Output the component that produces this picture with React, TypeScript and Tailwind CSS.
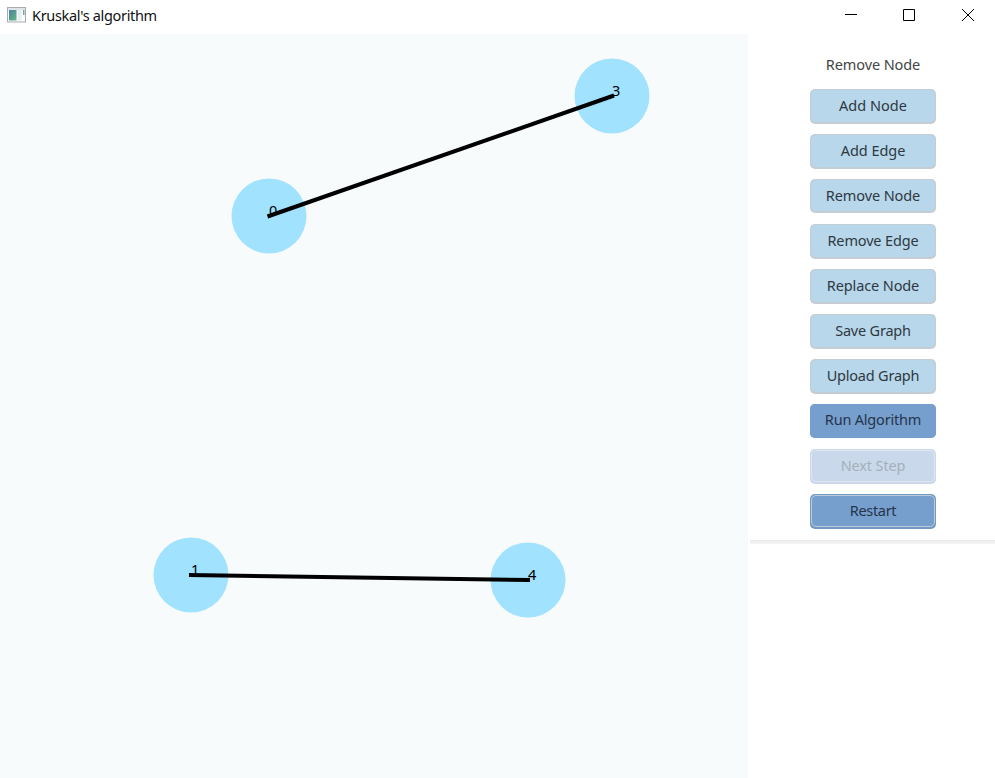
import React from "react";

type Variant = "light" | "run" | "disabled" | "focused";

const buttons: { label: string; variant: Variant; height: string; tracking: string }[] = [
  { label: "Add Node", variant: "light", height: "h-[35px]", tracking: "tracking-[0.05px]" },
  { label: "Add Edge", variant: "light", height: "h-[35px]", tracking: "tracking-[-0.03px]" },
  { label: "Remove Node", variant: "light", height: "h-[34px]", tracking: "tracking-[-0.1px]" },
  { label: "Remove Edge", variant: "light", height: "h-[35px]", tracking: "tracking-[-0.15px]" },
  { label: "Replace Node", variant: "light", height: "h-[35px]", tracking: "tracking-[-0.12px]" },
  { label: "Save Graph", variant: "light", height: "h-[35px]", tracking: "tracking-[-0.2px]" },
  { label: "Upload Graph", variant: "light", height: "h-[35px]", tracking: "tracking-[-0.2px]" },
  { label: "Run Algorithm", variant: "run", height: "h-[34px]", tracking: "tracking-[-0.2px]" },
  { label: "Next Step", variant: "disabled", height: "h-[35px]", tracking: "tracking-[-0.15px]" },
  { label: "Restart", variant: "focused", height: "h-[35px]", tracking: "tracking-[-0.3px]" },
];

const outer: Record<Variant, string> = {
  light: "bg-[#c3cdd3] text-[#2e3941] px-px pt-px pb-[2px]",
  run: "bg-[#769fce] text-[#26344a]",
  disabled: "bg-[#c9d9eb] text-[#a5afba] px-px pt-px pb-[2px]",
  focused: "bg-[#7399c2] text-[#26344a] px-px pt-px pb-[2px]",
};

const inner: Record<Variant, string> = {
  light: "bg-[#b8d7eb] pt-[5px]",
  run: "bg-[#769fce] pt-[5px]",
  disabled: "bg-[#c9d9eb] border border-[#e0e7ee] pt-[4px]",
  focused: "bg-[#769fce] border border-[#bccbdc] pt-[4px]",
};

const nodes = [
  { id: "0", x: 269, y: 216 },
  { id: "3", x: 612, y: 96 },
  { id: "1", x: 191, y: 575 },
  { id: "4", x: 528, y: 580 },
];

function TitleBar() {
  return (
    <header className="flex h-[34px] shrink-0 items-start justify-between bg-white">
      <div className="flex items-start pl-[7px]">
        <svg className="mt-[7px] h-[16px] w-[19px]" viewBox="0 0 19 16">
          <defs>
            <linearGradient id="pane" x1="0" y1="0" x2="1" y2="1">
              <stop offset="0" stopColor="#4a83a0" />
              <stop offset="1" stopColor="#62b783" />
            </linearGradient>
          </defs>
          <rect x="0.5" y="0.5" width="18" height="14.5" fill="#fafbfc" stroke="#a7acb1" />
          <rect x="1" y="1" width="17" height="2" fill="#dfe4e8" />
          <rect x="2" y="3" width="7.5" height="10.5" fill="url(#pane)" />
          <rect x="10.5" y="3" width="4" height="10.5" fill="#e9edf2" />
          <rect x="16" y="3" width="1.5" height="5" fill="#70a9a0" />
        </svg>
        <span className="ml-[6px] text-[14.5px] leading-[31px] tracking-[-0.33px] whitespace-nowrap text-[#111]">
          Kruskal's algorithm
        </span>
      </div>
      <svg className="h-[30px] w-[150px]" viewBox="0 0 150 30" fill="none" stroke="#000">
        <path d="M0 14.5h12" />
        <path d="M58.5 9.5h11v11h-11z" />
        <path d="M117 9l12 12M129 9l-12 12" />
      </svg>
    </header>
  );
}

function Graph() {
  return (
    <svg className="h-[744px] w-[748px] shrink-0 bg-[#f7fbfc]" viewBox="0 34 748 744">
      {nodes.map((n) => (
        <circle key={n.id} cx={n.x} cy={n.y} r="37.5" fill="#a1e2ff" />
      ))}
      {nodes.map((n) => (
        <text key={n.id} x={n.x} y={n.y} fontSize="14.5" fill="#000">
          {n.id}
        </text>
      ))}
      <g stroke="#000" strokeWidth="4" strokeLinecap="butt">
        <path d="M267.5 216.5L614 95.5" />
        <path d="M189 575L530 580" />
      </g>
    </svg>
  );
}

export default function App() {
  return (
    <div className="flex h-[778px] w-[995px] flex-col overflow-hidden bg-white font-['Noto_Sans','Open_Sans',sans-serif]">
      <TitleBar />
      <main className="flex">
        <Graph />
        <aside className="ml-[2px] flex w-[245px] flex-col">
          <div className="flex h-[506px] flex-col items-center pl-px">
            <p className="mt-[20px] h-[35px] text-[14.5px] leading-[21px] tracking-[-0.1px] text-[#444]">Remove Node</p>
            {buttons.map((b) => (
              <div key={b.label} className="h-[45px] shrink-0">
                <button className={`flex w-[126px] rounded-[5px] ${b.height} ${outer[b.variant]}`}>
                  <span
                    className={`flex h-full w-full items-start justify-center rounded-[5px] text-[14.5px] leading-[21px] whitespace-nowrap ${b.tracking} ${inner[b.variant]}`}
                  >
                    {b.label}
                  </span>
                </button>
              </div>
            ))}
          </div>
          <div className="h-[4px] bg-linear-to-b from-[#e9e9e9] to-[#f6f6f6]" />
        </aside>
      </main>
    </div>
  );
}
